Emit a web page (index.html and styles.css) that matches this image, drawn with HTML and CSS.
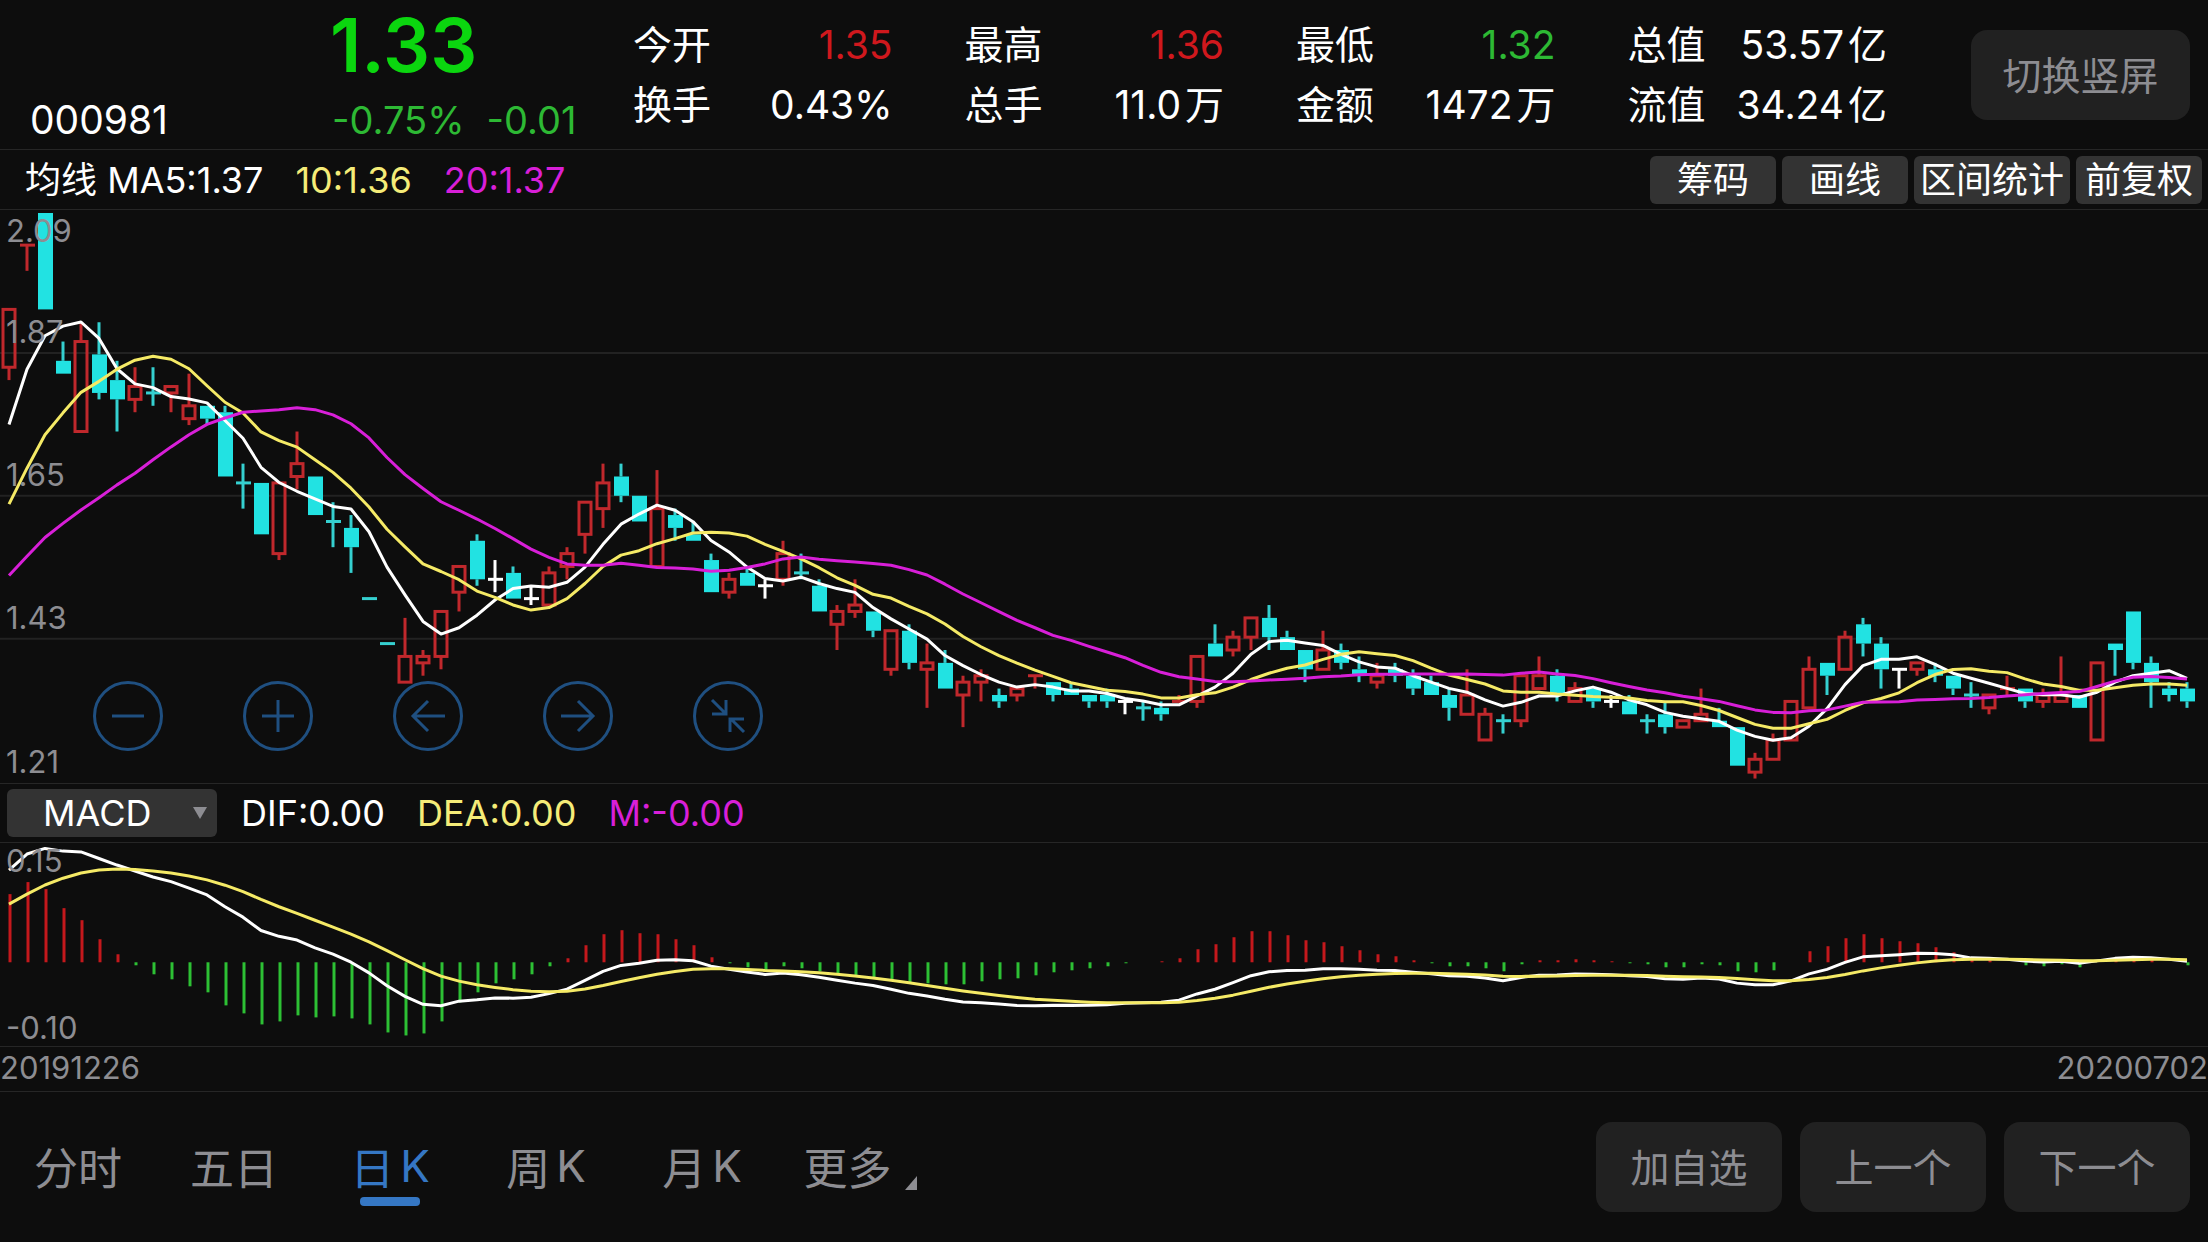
FILE: index.html
```html
<!DOCTYPE html>
<html lang="zh-CN">
<head>
<meta charset="utf-8">
<meta name="viewport" content="width=device-width, initial-scale=1">
<title>000981 日K</title>
<link rel="stylesheet" href="styles.css">
</head>
<body>
<header class="quote">
  <div class="code">000981</div>
  <div class="price">
    <strong class="last">1.33</strong>
    <div class="change"><span>-0.75%</span><span>-0.01</span></div>
  </div>
  <dl class="stats">
    <div class="stat"><dt>今开</dt><dd class="up">1.35</dd></div>
    <div class="stat"><dt>最高</dt><dd class="up">1.36</dd></div>
    <div class="stat"><dt>最低</dt><dd class="down">1.32</dd></div>
    <div class="stat"><dt>总值</dt><dd>53.57<span class="unit">亿</span></dd></div>
    <div class="stat"><dt>换手</dt><dd>0.43%</dd></div>
    <div class="stat"><dt>总手</dt><dd>11.0<span class="unit">万</span></dd></div>
    <div class="stat"><dt>金额</dt><dd>1472<span class="unit">万</span></dd></div>
    <div class="stat"><dt>流值</dt><dd>34.24<span class="unit">亿</span></dd></div>
  </dl>
  <button class="soft-button rotate" type="button">切换竖屏</button>
</header>

<section class="bar">
  <div class="legend">
    <span>均线 MA5:1.37</span><span class="yellow">10:1.36</span><span class="magenta">20:1.37</span>
  </div>
  <div class="tools">
    <button class="tool" type="button">筹码</button>
    <button class="tool" type="button">画线</button>
    <button class="tool wide" type="button">区间统计</button>
    <button class="tool" type="button">前复权</button>
  </div>
</section>

<main class="charts">
  <section class="chart kline">
    <svg id="kline" class="plot" viewBox="0 0 2208 573" preserveAspectRatio="none" role="img" aria-label="日K线"></svg>
    <div class="scale">
      <div class="band first"><span>2.09</span><span>1.87</span></div>
      <div class="band"><span>1.65</span></div>
      <div class="band"><span>1.43</span></div>
      <div class="band"><span>1.21</span></div>
    </div>
    <div class="controls">
      <button class="round" type="button" aria-label="缩小"><svg viewBox="0 0 70 70"><circle cx="35" cy="35" r="33.5"/><path d="M19 35H51"/></svg></button>
      <button class="round" type="button" aria-label="放大"><svg viewBox="0 0 70 70"><circle cx="35" cy="35" r="33.5"/><path d="M19 35H51M35 19V51"/></svg></button>
      <button class="round" type="button" aria-label="左移"><svg viewBox="0 0 70 70"><circle cx="35" cy="35" r="33.5"/><path d="M52 35H20M35 20L20 35L35 50"/></svg></button>
      <button class="round" type="button" aria-label="右移"><svg viewBox="0 0 70 70"><circle cx="35" cy="35" r="33.5"/><path d="M18 35H50M35 20L50 35L35 50"/></svg></button>
      <button class="round" type="button" aria-label="收起"><svg viewBox="0 0 70 70"><circle cx="35" cy="35" r="33.5"/><path d="M19 19L32 32M33 19V33H19M51 51L38 38M37 51V38H51"/></svg></button>
    </div>
  </section>

  <section class="bar macd-bar">
    <div class="picker">
      <select aria-label="指标"><option>MACD</option><option>KDJ</option></select>
    </div>
    <div class="legend">
      <span>DIF:0.00</span><span class="yellow">DEA:0.00</span><span class="magenta">M:-0.00</span>
    </div>
  </section>

  <section class="chart macd">
    <svg id="macd" class="plot" viewBox="0 0 2208 203" preserveAspectRatio="none" role="img" aria-label="MACD"></svg>
    <div class="scale">
      <div class="band first"><span>0.15</span><span>-0.10</span></div>
    </div>
  </section>
</main>

<div class="dates"><time datetime="2019-12-26">20191226</time><time datetime="2020-07-02">20200702</time></div>

<footer class="footer">
  <nav class="tabs">
    <button class="tab" type="button">分时</button>
    <button class="tab" type="button">五日</button>
    <button class="tab active" type="button">日<span class="latin">K</span></button>
    <button class="tab" type="button">周<span class="latin">K</span></button>
    <button class="tab" type="button">月<span class="latin">K</span></button>
    <button class="tab more" type="button">更多</button>
  </nav>
  <div class="actions">
    <button class="soft-button" type="button">加自选</button>
    <button class="soft-button" type="button">上一个</button>
    <button class="soft-button" type="button">下一个</button>
  </div>
</footer>
<script src="chart.js"></script>
</body>
</html>
```
FILE: styles.css
```css
* { box-sizing: border-box; }

body {
  margin: 0;
  min-height: 100vh;
  display: flex;
  flex-direction: column;
  background: #0d0d0d;
  color: #fff;
  font-family: Inter, "Noto Sans CJK SC", sans-serif;
  font-size: 39px;
}

button, select {
  margin: 0;
  padding: 0;
  border: 0;
  background: none;
  color: inherit;
  font: inherit;
  white-space: nowrap;
}

.yellow { color: #f5ec78; }
.magenta { color: #d81fd8; }
.up { color: #d0181d; }
.down { color: #2db934; }

.quote {
  display: flex;
  height: 150px;
  padding: 0 18px 0 30px;
  border-bottom: 1px solid #262626;
}

.code {
  width: 300px;
  padding-top: 90px;
  line-height: 60px;
}

.price { width: 303px; }

.last {
  display: block;
  height: 90px;
  line-height: 90px;
  font-size: 74px;
  font-weight: 600;
  color: #0bd60f;
}

.change {
  display: flex;
  gap: 22px;
  padding-left: 2px;
  line-height: 60px;
  font-size: 38px;
  color: #2db934;
}

.stats {
  flex: 1;
  display: grid;
  grid-template-columns: repeat(4, 1fr);
  grid-auto-rows: 60px;
  column-gap: 72px;
  margin: 0;
  padding-top: 15px;
  line-height: 60px;
}

.stat {
  display: flex;
  justify-content: space-between;
  white-space: nowrap;
}

.stat dd { margin: 0; }
.unit { margin-left: 4px; }

.soft-button {
  width: 186px;
  height: 90px;
  padding-bottom: 5px;
  border-radius: 16px;
  background: #212121;
  color: #8d8d92;
}

.rotate {
  width: 219px;
  margin: 30px 0 0 84px;
}

.bar {
  display: flex;
  align-items: center;
  justify-content: space-between;
  height: 60px;
  padding: 0 6px 0 25px;
  border-bottom: 1px solid #262626;
  font-size: 36px;
}

.legend {
  display: flex;
  align-items: baseline;
  gap: 32px;
  line-height: 48px;
  white-space: nowrap;
}

.tools { display: flex; gap: 6px; }

.tool {
  width: 126px;
  height: 48px;
  border-radius: 6px;
  background: #333;
  line-height: 48px;
}

.tool.wide { width: 156px; }

.charts {
  flex: 1;
  display: flex;
  flex-direction: column;
}

.chart {
  position: relative;
  border-bottom: 1px solid #262626;
}

.kline { flex: 574 1 0; }
.macd { flex: 204 1 0; }

.plot {
  position: absolute;
  inset: 0;
  width: 100%;
  height: 100%;
}

.scale {
  position: absolute;
  inset: 0;
  display: flex;
  flex-direction: column;
  padding-left: 6px;
  color: #8d8d92;
  font-size: 31px;
  line-height: 42px;
}

.band {
  flex: 1;
  display: flex;
  flex-direction: column;
  justify-content: flex-end;
}

.band.first { justify-content: space-between; }
.macd .scale { line-height: 36px; }

.controls {
  position: absolute;
  left: 93px;
  bottom: 32px;
  display: flex;
  gap: 80px;
}

.round {
  width: 70px;
  height: 70px;
  fill: none;
  stroke: #1f4f80;
  stroke-width: 3;
}

.round svg { display: block; }

.macd-bar {
  flex: none;
  justify-content: flex-start;
  height: 59px;
  gap: 24px;
  padding-left: 7px;
}

.picker {
  position: relative;
  width: 210px;
  height: 48px;
}

.picker select {
  width: 100%;
  height: 100%;
  padding-left: 36px;
  border-radius: 6px;
  background: #333;
  appearance: none;
}

.picker::after {
  content: "";
  position: absolute;
  right: 10px;
  top: 18px;
  border: 7px solid transparent;
  border-top: 12px solid #8d8d92;
  border-bottom: 0;
}

.dates {
  display: flex;
  justify-content: space-between;
  height: 45px;
  border-bottom: 1px solid #262626;
  color: #8d8d92;
  font-size: 31px;
  line-height: 42px;
}

.footer {
  display: flex;
  align-items: center;
  justify-content: space-between;
  height: 150px;
  padding-right: 18px;
}

.tabs { display: flex; }

.tab {
  position: relative;
  display: flex;
  align-items: center;
  justify-content: center;
  width: 156px;
  height: 90px;
  padding-bottom: 2px;
  color: #8d8d92;
  font-size: 44px;
}

.latin { margin-left: 6px; }
.tab.active { color: #3577c4; }

.tab.active::after {
  content: "";
  position: absolute;
  left: 48px;
  bottom: 6px;
  width: 60px;
  height: 9px;
  border-radius: 4px;
  background: #3577c4;
}

.tab.more { width: 160px; }

.tab.more::after {
  content: "";
  align-self: flex-end;
  margin: 0 0 20px 13px;
  border-left: 12px solid transparent;
  border-bottom: 14px solid #8d8d92;
}

.actions { display: flex; gap: 18px; }

.grid { stroke: #222; stroke-width: 2; }
.candle-r { fill: none; stroke: #c0282c; stroke-width: 3; }
.candle-c { fill: #22e2e2; }
.wick-r { stroke: #c0282c; stroke-width: 3; }
.wick-c { stroke: #35d0d0; stroke-width: 3; }
.wick-w { stroke: #fff; stroke-width: 3; }
.line { fill: none; stroke-width: 3; stroke-linejoin: round; }
.ma5, .dif { stroke: #fff; }
.ma10, .dea { stroke: #f5ea66; }
.ma20 { stroke: #d81fd8; }
.hist-up { stroke: #c4181c; stroke-width: 3; }
.hist-down { stroke: #2dc034; stroke-width: 3; }
```
FILE: chart.js
```js
// Daily candles: kind (r up, c down, w flat), body top, body bottom, high, low; prices in cents.
const candles = `
r194,185,194,183 r204,204,204,200 c209,194,209,194 c186,184,189,184 r189,175,192,175
c187,181,192,180 c183,180,186,175 r182,180,185,178 c181,181,185,179 r182,181,182,178
r179,177,184,176 c179,177,179,176 c178,168,179,168 c167,167,170,163 c167,159,167,159
r167,156,167,155 r170,168,175,166 c168,162,168,162 c161,161,164,157 c160,157,162,153
c149,149,149,149 c142,142,142,142 r140,136,146,136 r140,139,141,137 r147,140,147,138
r154,150,154,147 c158,152,159,151 w152,152,155,150 c153,149,154,149 w149,149,151,148
r153,148,154,148 r156,154,157,152 r164,159,164,156 r167,163,170,160 c168,165,170,164
c165,161,165,161 r163,154,169,154 c162,160,163,158 c159,158,161,158 c155,150,156,150
r152,150,153,149 c153,151,154,151 w151,151,152,149 r156,152,158,151 c153,153,156,152
c151,147,152,147 r147,145,148,141 r148,147,152,146 c147,144,147,143 r144,138,144,137
c144,139,145,138 r139,138,142,132 c139,135,141,135 r136,134,137,129 r137,136,138,133
c134,133,135,132 r135,134,135,133 r137,137,137,135 c136,134,136,133 c135,134,136,134
c134,133,134,132 c134,133,135,132 w133,133,133,131 c132,132,133,130 c132,131,133,130
r133,133,134,133 r140,133,140,132 c142,140,145,140 r143,141,144,140 r146,143,146,141
c146,143,148,141 c143,141,144,141 c141,138,141,136 r141,138,144,138 c141,139,142,138
c138,137,140,136 r137,136,139,135 c138,137,139,136 c137,135,138,134 c136,134,137,134
c134,132,135,130 r134,131,138,131 r131,127,132,127 c130,130,131,128 r137,130,137,129
r137,135,140,135 c137,134,138,133 r135,133,136,133 c135,133,135,132 w133,133,134,132
c133,131,134,131 c130,130,131,128 c131,129,133,128 r130,129,130,129 r131,130,135,130
c130,129,132,129 c129,123,129,123 r124,122,125,121 r127,124,128,124 r133,127,133,127
r138,132,140,132 c139,137,139,134 r143,138,144,138 c145,142,146,140 c142,138,143,135
w138,138,138,135 r139,138,139,137 c138,137,139,136 c137,135,137,134 c134,134,136,132
r134,132,134,131 r135,135,137,134 c135,133,135,132 r134,133,135,132 r134,133,140,133
c134,132,134,132 r139,127,139,127 c142,141,142,137 c147,139,147,138 c139,136,140,132
c135,134,136,133 c135,133,136,132`.trim().split(/\s+/).map(t => [t[0], ...t.slice(1).split(',').map(Number)]);

// MACD histogram, in chart units above or below the zero line.
const hist = [68,80,73,54,42,23,8,-3,-12,-17,-24,-30,-43,-51,-62,-59,-53,-55,-54,-56,-62,-70,-73,-71,
  -59,-40,-30,-21,-17,-12,-4,4,17,28,32,29,28,23,17,5,-1,-5,-8,-4,-6,-9,-12,-14,-15,-18,-21,-21,-22,
  -22,-19,-17,-16,-13,-10,-8,-6,-4,-1,0,1,4,13,18,25,31,31,27,22,20,16,12,8,6,2,-1,-4,-4,-6,-9,-2,
  2,2,3,2,1,-1,-2,-5,-5,-2,-3,-9,-10,-8,0,11,16,24,28,24,21,19,15,10,3,2,0,-3,-4,-2,-5,0,4,5,3,0,-3];

// Averages of the days whose window reaches before the first candle.
const early = {
  5: [176.1, 184.7, 189.9, 191.4],
  10: [163.7, 169.3, 174.5, 177.9, 181.1, 182.8, 184.7, 186.1, 186.7],
  20: [152.6, 155.6, 158.5, 160.7, 162.8, 164.7, 166.7, 168.5, 170.6, 172.6, 174.5, 176.1, 177.1,
    178, 178.2, 178.4, 178.7, 178.4, 177.6]
};

const x = i => 9 + 18 * i;
const y = cents => 3 + (209 - cents) * 6.432;
const line = (cls, x1, y1, x2, y2) => `<line class="${cls}" x1="${x1}" y1="${y1}" x2="${x2}" y2="${y2}"/>`;
const curve = (cls, ys) => `<polyline class="line ${cls}" points="${ys.map((v, i) => x(i) + ',' + v.toFixed(1)).join(' ')}"/>`;

function average(days) {
  const close = candles.map(c => c[0] === 'r' ? c[1] : c[2]);
  return close.map((_, i) => {
    if (i < days - 1) return y(early[days][i]);
    const mean = close.slice(i - days + 1, i + 1).reduce((a, b) => a + b) / days;
    return y(136.6 + (mean - 136.6) * 0.983);
  });
}

let k = [143, 286, 429].map(g => line('grid', 0, g, 2208, g)).join('');
candles.forEach(([kind, top, bottom, high, low], i) => {
  const cx = x(i), yt = y(top), yb = y(bottom);
  if (high > top) k += line('wick-' + kind, cx, y(high), cx, yt);
  if (low < bottom) k += line('wick-' + kind, cx, yb, cx, y(low));
  if (top === bottom) k += line('wick-' + kind, cx - 7, yt, cx + 8, yt);
  else k += `<rect class="candle-${kind}" x="${kind === 'r' ? cx - 6 : cx - 7}" y="${yt}" width="${kind === 'r' ? 12 : 15}" height="${yb - yt}"/>`;
});
k += curve('ma5', average(5)) + curve('ma10', average(10)) + curve('ma20', average(20));
document.getElementById('kline').innerHTML = k;

const zero = 119;
let signal = 58;
const dea = hist.map((h, i) => i ? (signal += h / 8) : signal);
let m = hist.map((h, i) => h ? line(h > 0 ? 'hist-up' : 'hist-down', x(i) + 1, zero, x(i) + 1, zero - h) : '').join('');
m += curve('dif', dea.map((v, i) => zero - v - hist[i] / 2)) + curve('dea', dea.map(v => zero - v));
document.getElementById('macd').innerHTML = m;
```
